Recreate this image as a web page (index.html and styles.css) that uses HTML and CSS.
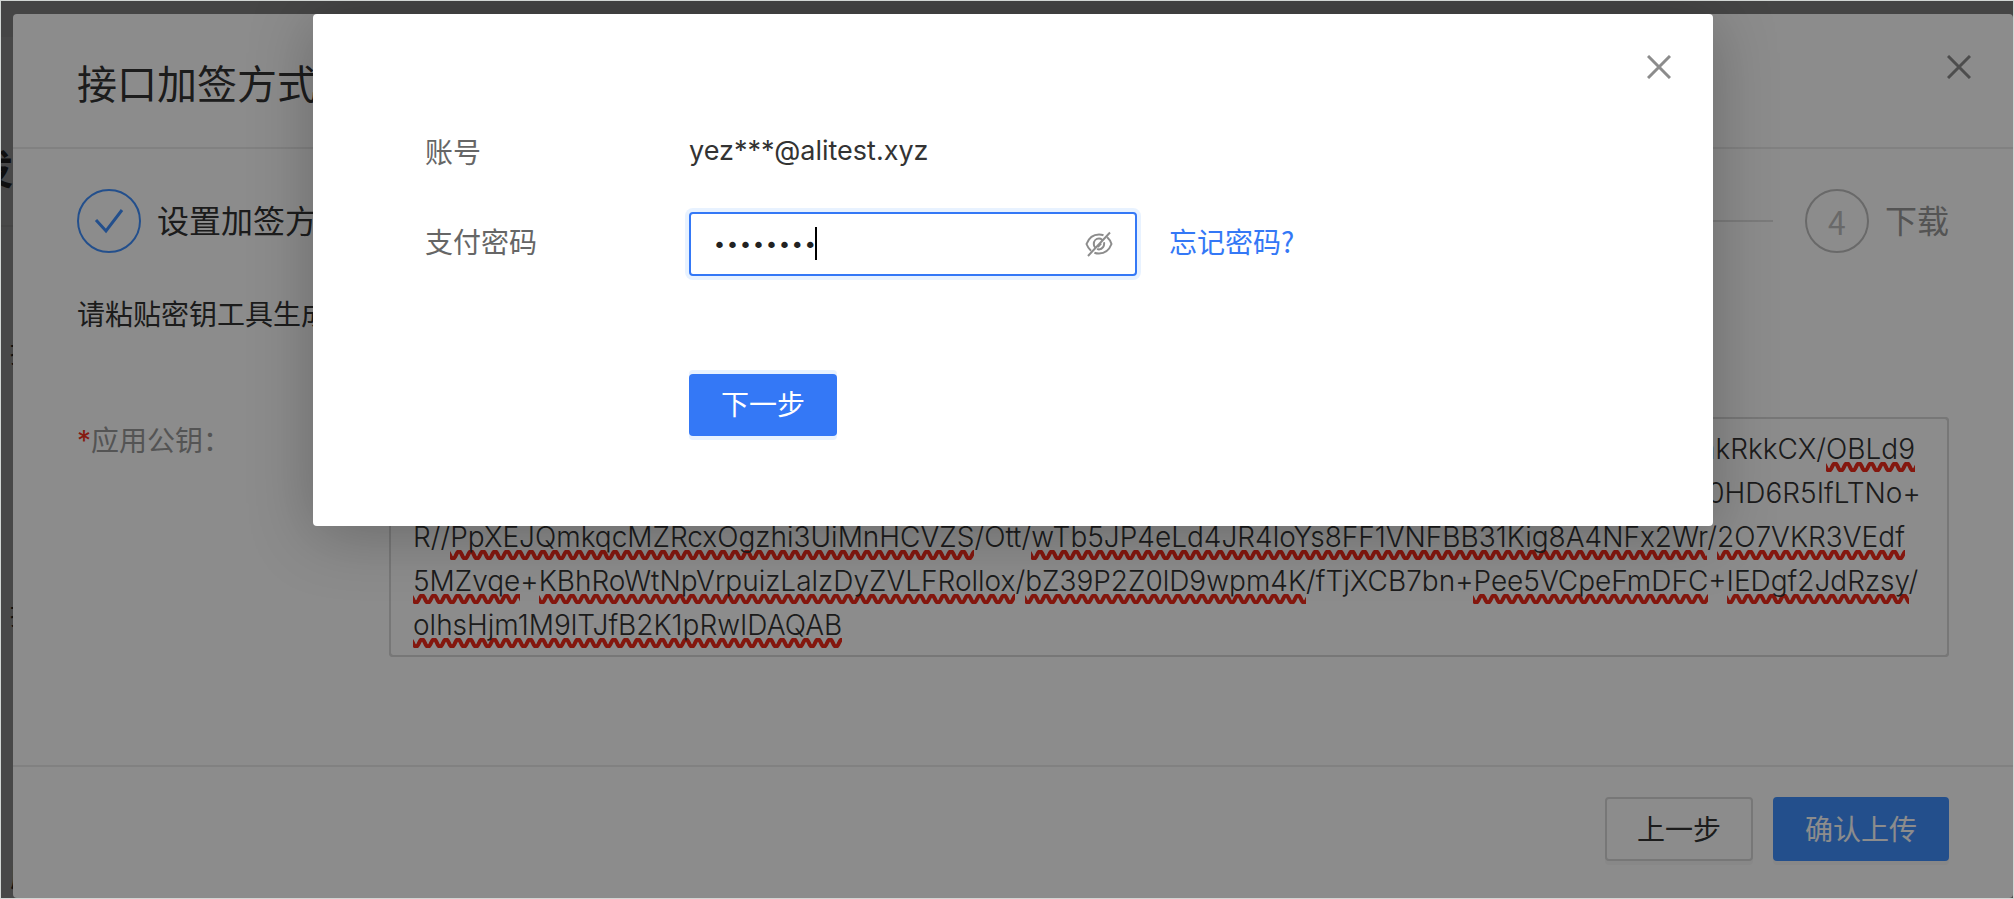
FILE: index.html
```html
<!DOCTYPE html>
<html lang="zh-CN">
<head>
    <meta charset="UTF-8">
    <meta name="viewport" content="width=device-width, initial-scale=1.0">
    <title>接口加签方式</title>
    <link rel="stylesheet" href="styles.css">
</head>
<body>
    <div class="frame">
        <main class="page">
            <div class="topbar"></div>
            <h2>开发设置</h2>
            <p>接口加签方式</p>
            <p>接口内容加密</p>
            <p>应用网关</p>
        </main>

        <div class="mask"></div>
        <section class="drawer">
            <header class="drawer-header">
                <h1>接口加签方式</h1>
                <button class="close" aria-label="关闭">
                    <svg viewBox="0 0 24 24"><path d="M1 1L23 23M23 1L1 23"/></svg>
                </button>
            </header>
            <div class="drawer-body">
                <div class="steps">
                    <div class="step done">
                        <span class="step-icon"><svg viewBox="0 0 30 26"><path d="M2 12L12 23L28 2"/></svg></span>
                        <span class="step-title">设置加签方式</span>
                    </div>
                    <div class="step-line"></div>
                    <div class="step done">
                        <span class="step-icon">2</span>
                        <span class="step-title">上传公钥</span>
                    </div>
                    <div class="step-line"></div>
                    <div class="step">
                        <span class="step-icon">3</span>
                        <span class="step-title">验证</span>
                    </div>
                    <div class="step-line"></div>
                    <div class="step">
                        <span class="step-icon">4</span>
                        <span class="step-title">下载</span>
                    </div>
                </div>
                <p class="tip">请粘贴密钥工具生成的应用公钥</p>
                <div class="key-row">
                    <label for="publicKey"><span class="required">*</span>应用公钥：</label>
                    <div class="key-box">
                        <!-- wavy marks under the textarea text -->
                        <div class="key-marks" aria-hidden="true">MIIBIjANBgkqhkiG9w0BAQEFAAOCAQ8AMIIBCgKCAQEAh4sTq8mWzUeY2vLxP3nHJdb7RtUo5Ev8akRkkCX/<u>OBLd9</u>
aQw7ZtYbN5cVxMkL0pRjHgFdSaPoIuYtReWq1Zx2Cv3Bn4Mm5Kj6Hg7Fd8SsAqWe4Rt6YuPz3Kd8n0HD6R5IfLTNo+
R//<u>PpXEJQmkqcMZRcxOgzhi3UiMnHCVZS</u>/Ott/<u>wTb5JP4eLd4JR4loYs8FF1VNFBB31Kig8A4NFx2Wr</u>/<u>2O7VKR3VEdf</u>
<u>5MZvqe</u>+<u>KBhRoWtNpVrpuizLalzDyZVLFRollox</u>/<u>bZ39P2Z0lD9wpm4K</u>/fTjXCB7bn+<u>Pee5VCpeFmDFC</u>+<u>IEDgf2JdRzsy</u>/
<u>olhsHjm1M9lTJfB2K1pRwIDAQAB</u></div>
                        <textarea id="publicKey" spellcheck="false">MIIBIjANBgkqhkiG9w0BAQEFAAOCAQ8AMIIBCgKCAQEAh4sTq8mWzUeY2vLxP3nHJdb7RtUo5Ev8akRkkCX/OBLd9
aQw7ZtYbN5cVxMkL0pRjHgFdSaPoIuYtReWq1Zx2Cv3Bn4Mm5Kj6Hg7Fd8SsAqWe4Rt6YuPz3Kd8n0HD6R5IfLTNo+
R//PpXEJQmkqcMZRcxOgzhi3UiMnHCVZS/Ott/wTb5JP4eLd4JR4loYs8FF1VNFBB31Kig8A4NFx2Wr/2O7VKR3VEdf
5MZvqe+KBhRoWtNpVrpuizLalzDyZVLFRollox/bZ39P2Z0lD9wpm4K/fTjXCB7bn+Pee5VCpeFmDFC+IEDgf2JdRzsy/
olhsHjm1M9lTJfB2K1pRwIDAQAB</textarea>
                    </div>
                </div>
            </div>
            <footer class="drawer-footer">
                <button class="btn">上一步</button>
                <button class="btn btn-upload">确认上传</button>
            </footer>
        </section>

        <div class="mask"></div>
        <form class="modal" onsubmit="return false">
            <button type="button" class="close" aria-label="关闭">
                <svg viewBox="0 0 24 24"><path d="M1 1L23 23M23 1L1 23"/></svg>
            </button>
            <div class="row">
                <span class="row-label">账号</span>
                <span class="account">yez***@alitest.xyz</span>
            </div>
            <div class="row">
                <label class="row-label" for="payPassword">支付密码</label>
                <div class="password">
                    <input type="password" id="payPassword" value="12345678">
                    <span class="caret"></span>
                    <button type="button" class="eye" aria-label="显示密码">
                        <svg viewBox="0 0 28 26"><path d="M18.500 4.200C17.100 3.700 15.600 3.500 14 3.500C8 3.500 3.800 7 1.500 13C2.600 15.900 4.100 18.200 6 19.800M22.200 6.300C24.100 7.900 25.500 10.200 26.500 13C24.200 19 20 22.500 14 22.500C12.300 22.500 10.800 22.200 9.400 21.700M17 8.700C16.200 8 15.200 7.600 14 7.600C11 7.600 8.800 10 8.800 13C8.800 14.300 9.200 15.500 10 16.400M19 11.300C19.700 14.900 17.500 18.300 14 18.400C13.300 18.400 12.700 18.200 12.100 17.900M3 25L25 1.500M12.800 16L16.200 12.400"/></svg>
                    </button>
                </div>
                <a class="forgot" href="#">忘记密码?</a>
            </div>
            <button class="btn-next">下一步</button>
        </form>
    </div>
</body>
</html>
```
FILE: styles.css
```css
* {
    box-sizing: border-box;
}
body {
    margin: 0;
    font-family: "Noto Sans CJK SC", sans-serif;
    font-size: 28px;
    line-height: 44px;
    color: #333;
}
h1, h2, p {
    margin: 0;
}
button, input, textarea {
    font: inherit;
    color: inherit;
    margin: 0;
}
button {
    cursor: pointer;
}
.frame {
    position: relative;
    height: 100vh;
    border: 1px solid #d2d6d4;
    overflow: hidden;
}

/* page behind the drawer */
.page {
    height: 100%;
    background: #eee;
    white-space: nowrap;
}
.topbar {
    height: 36px;
    background: #e6e6e6;
}
.page h2 {
    height: 190px;
    padding-top: 108px;
    margin-left: -68px;
    font-size: 40px;
    border-bottom: 2px solid #e2e2e2;
}
.page p {
    padding: 102px 0 116px 9px;
}
.mask {
    position: absolute;
    inset: 0;
    background: rgba(0, 0, 0, 0.45);
}

/* drawer */
.drawer {
    position: absolute;
    top: 13px;
    left: 12px;
    right: 0;
    bottom: 0;
    display: flex;
    flex-direction: column;
    background: #fff;
    border-radius: 4px;
}
.drawer-header {
    padding: 46px 64px 43px;
    border-bottom: 2px solid #ebebeb;
}
.drawer-header h1 {
    font-size: 40px;
    font-weight: 400;
}
.close {
    position: absolute;
    top: 41px;
    right: 42px;
    width: 24px;
    height: 24px;
    padding: 0;
    border: 0;
    background: none;
}
.close svg {
    display: block;
    fill: none;
    stroke: #8c8c8c;
    stroke-width: 3;
}
.drawer-body {
    flex: 1;
    padding: 40px 64px 0;
}
.steps {
    display: flex;
    align-items: center;
    font-size: 32px;
}
.step {
    display: flex;
    align-items: center;
    gap: 16px;
    color: #999;
}
.step.done {
    color: #333;
}
.step-icon {
    display: flex;
    align-items: center;
    justify-content: center;
    width: 64px;
    height: 64px;
    border: 2px solid #bfbfbf;
    border-radius: 50%;
    color: #bfbfbf;
}
.step.done .step-icon {
    border-color: #4191ff;
    color: #4191ff;
}
.step-icon svg {
    width: 30px;
    height: 26px;
    fill: none;
    stroke: currentColor;
    stroke-width: 3;
}
.step-title {
    padding-bottom: 4px;
}
.step-line {
    flex: 1;
    height: 2px;
    margin: 0 32px;
    background: #e0e0e0;
}
.tip {
    margin-top: 38px;
}
.key-row {
    display: flex;
    margin-top: 82px;
}
.key-row label {
    width: 312px;
    color: #999;
}
.required {
    color: #f5301f;
    font-family: Inter, sans-serif;
}
.key-box {
    flex: 1;
    display: grid;
    font-family: Inter, "Liberation Sans", sans-serif;
    font-weight: 300;
}
.key-marks, .key-box textarea {
    grid-area: 1 / 1;
    height: 240px;
    padding: 8px 22px;
    border: 2px solid #d9d9d9;
    border-radius: 4px;
    white-space: pre;
    overflow: hidden;
}
.key-marks {
    color: transparent;
}
.key-marks u {
    padding-bottom: 6px;
    text-decoration: none;
    background: url("data:image/svg+xml,%3Csvg xmlns='http://www.w3.org/2000/svg' width='12' height='10'%3E%3Cpath d='M-3 5C-1 0 1 0 3 5S7 10 9 5S13 0 15 5S19 10 21 5' transform='translate(-3 0)' fill='none' stroke='%23f02a1a' stroke-width='4'/%3E%3C/svg%3E") repeat-x left bottom;
}
.key-box textarea {
    display: block;
    width: 100%;
    background: none;
    resize: none;
    outline: none;
}
.drawer-footer {
    display: flex;
    justify-content: flex-end;
    gap: 20px;
    padding: 30px 64px 37px;
    border-top: 2px solid #ebebeb;
}
.btn {
    height: 64px;
    padding: 0 30px 2px;
    border: 2px solid #d9d9d9;
    border-radius: 4px;
    background: #fff;
    box-shadow: 0 4px 0 rgba(0, 0, 0, 0.03);
}
.btn-upload {
    border-color: #4191ff;
    background: #4191ff;
    color: #fff;
}

/* password modal */
.modal {
    position: absolute;
    top: 13px;
    left: 12px;
    right: 0;
    width: 1400px;
    max-width: 100%;
    margin: 0 auto;
    padding: 108px 112px 90px;
    background: #fff;
    border-radius: 4px;
    box-shadow: 0 8px 64px rgba(0, 0, 0, 0.25);
}
.row {
    display: flex;
    height: 64px;
    margin-bottom: 26px;
    line-height: 58px;
}
.row-label {
    width: 264px;
    color: #666;
}
.account {
    font-family: Inter, sans-serif;
    font-size: 27px;
}
.password {
    position: relative;
    width: 448px;
}
.password input {
    display: block;
    width: 100%;
    height: 64px;
    padding: 2px 80px 0 22px;
    border: 2px solid #3478f6;
    border-radius: 4px;
    outline: none;
    box-shadow: 0 0 0 4px #e8f2ff;
    font-family: "DejaVu Sans", sans-serif;
    font-size: 22px;
    color: #222;
}
.caret {
    position: absolute;
    top: 15px;
    left: 126px;
    width: 2px;
    height: 33px;
    background: #000;
}
.eye {
    position: absolute;
    top: 19px;
    right: 24px;
    width: 28px;
    height: 26px;
    padding: 0;
    border: 0;
    background: none;
}
.eye svg {
    display: block;
    fill: none;
    stroke: #8c8c8c;
    stroke-width: 2;
}
.forgot {
    margin-left: 32px;
    color: #3478f6;
    text-decoration: none;
}
.btn-next {
    display: block;
    height: 62px;
    margin: 98px 0 0 264px;
    padding: 0 32px 4px;
    border: 0;
    border-radius: 4px;
    background: #3478f6;
    color: #fff;
    box-shadow: 0 4px 0 #e8f2ff, 0 -4px 0 #e8f2ff;
}
```
